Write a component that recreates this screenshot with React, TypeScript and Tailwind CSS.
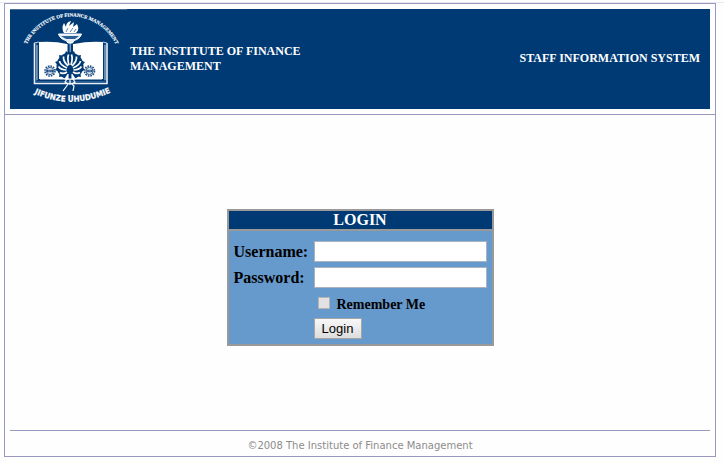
import React from "react";

const SPIKES = [-135, -105, -75, -45, -15, 15, 45, 75, 105, 135];

function Gear({ x }: { x: number }) {
  return (
    <g transform={`translate(${x} 71)`}>
      <circle r="5" fill="#fff" stroke="#1f4c82" strokeWidth="1.6" strokeDasharray="1.6 1" />
      <circle r="3.6" fill="#dce7f1" stroke="#003a75" strokeWidth="0.8" />
      <rect x="-3" y="-1.2" width="6" height="2.4" fill="#1f4c82" />
      <path d="M-2 0H2" stroke="#fff" strokeWidth="0.7" strokeDasharray="0.8 0.6" />
    </g>
  );
}

function Crest() {
  return (
    <svg viewBox="10 9 120 100" className="h-[100px] w-[120px] shrink-0" role="img" aria-label="Institute crest">
      <defs>
        <path id="crest-top" d="M23.500 53A49.500 49.500 0 0 1 119 53" />
        <path id="crest-bottom" d="M31 92Q71 112 114 91" />
      </defs>
      <path d="M10 9.500H127" stroke="#4d6c94" strokeWidth="1" />
      {/* open book */}
      <path d="M34.500 43V83.500H107V43" fill="none" stroke="#e8eff6" strokeWidth="1.600" />
      <path d="M36.500 43V81.500H105V43" fill="none" stroke="#2b5c92" strokeWidth="1" />
      <path d="M39 42Q55 41 67 44H74Q88 41 103 42V79H39Z" fill="#fff" />
      <path d="M34 43L39 42M103 42L107 43M37 45V80M105 45V80" stroke="#b9cade" strokeWidth="1" />
      <path d="M40 79.500H102" stroke="#7c9abd" strokeWidth="1" />
      {/* torch */}
      <path d="M67.500 41H73V54H67.500Z" fill="#003a75" />
      <path d="M70.200 43V52" stroke="#aac2da" strokeWidth="1" />
      <path d="M58.500 34H81.500Q80 39 74 40.500L72.500 43H68L66 40.500Q60 39 58.500 34Z" fill="#e3edf6" stroke="#fff" strokeWidth="1" />
      <path d="M61 36H79L75 39H66Z" fill="#2c5d94" />
      <path d="M64 33Q61 28 64 23L66 27Q66 22 71 21L69 26L74 22L73 27L77 24Q80 30 76 33Z" fill="#fff" />
      <path d="M66 32L68 28M70 32L73 28M74 32L76 29" stroke="#34659a" strokeWidth="0.800" />
      {/* tree */}
      {SPIKES.map((angle) => (
        <path key={angle} d="M67.500 54L70 50.500L72.500 54Z" fill="#003a75" transform={`rotate(${angle} 70 66)`} />
      ))}
      <circle cx="70" cy="66" r="13.500" fill="#003a75" />
      <path
        d="M69 65Q67 59 68.500 54.500M71 65Q73 59 71.500 54.500M68 66Q63 61 63.500 56.500M72 66Q77 61 76.500 56.500M67 68Q60 65 59.500 61M73 68Q80 65 80.500 61M66.500 70Q61 70 58.500 66.500M73.500 70Q79 70 81.500 66.500M67 72Q63 74.500 60 72.500M73 72Q77 74.500 80 72.500"
        fill="none"
        stroke="#fff"
        strokeWidth="1.700"
      />
      <path d="M64 79.500L67.500 74H72.500L76 79.500Z" fill="#fff" />
      <path d="M68.800 66H71.200L71.500 79H68.500Z" fill="#003a75" />
      <Gear x={50} />
      <Gear x={89.5} />
      {/* roots */}
      <path d="M67 79H73L75 82L72 84L74 86L73 91M67 79L65 82L68 84L66 87L63 91M70 80V85" fill="none" stroke="#fff" strokeWidth="1.200" />
      <text fill="#fff" stroke="#fff" strokeWidth="0.15" className="font-['Liberation_Serif',serif] text-[5px] font-bold">
        <textPath href="#crest-top" startOffset="50%" textAnchor="middle">
          THE INSTITUTE OF FINANCE MANAGEMENT
        </textPath>
      </text>
      <text fill="#fff" stroke="#fff" strokeWidth="0.2" className="font-['DejaVu_Sans_Condensed','DejaVu_Sans',sans-serif] text-[8px] font-bold">
        <textPath href="#crest-bottom" startOffset="50%" textAnchor="middle">
          JIFUNZE UHUDUMIE
        </textPath>
      </text>
    </svg>
  );
}

const FIELD =
  "h-[21px] w-full min-w-0 border border-[#a9b3bf] bg-white px-1 font-['Liberation_Sans',sans-serif] text-[13px] outline-none";

export default function App() {
  return (
    <div className="flex min-h-screen flex-col bg-[#fefefe] pb-1.5 pt-0.5 font-['Liberation_Serif','Times_New_Roman',serif]">
      <div className="border-t border-[#e8e8ee]" />
      <div className="ml-1 mr-2 flex flex-1 flex-col border border-[#9999c0]">
        <header className="border-b border-[#9999c0] p-[5px]">
          <div className="flex items-center justify-between bg-[#003a75] pr-2.5 text-[12px] font-bold leading-[15px] text-white">
            <div className="flex items-center">
              <Crest />
              <h1 className="w-[200px]">THE INSTITUTE OF FINANCE MANAGEMENT</h1>
            </div>
            <p className="pb-0.5">STAFF INFORMATION SYSTEM</p>
          </div>
        </header>

        <main className="flex flex-1 items-center justify-center pt-[10px]">
          <form
            className="w-[267px] border-2 border-[#999] bg-[#6699cc] text-black"
            onSubmit={(event) => event.preventDefault()}
          >
            <h2 className="border-b-2 border-[#999] bg-[#003a75] text-center text-[16px] font-bold leading-[18px] text-white">
              LOGIN
            </h2>
            <div className="grid grid-cols-[80px_1fr] items-center gap-y-[5px] px-[5px] pb-[5px] pt-[10px] text-[16px] font-bold leading-5">
              <label htmlFor="username">Username:</label>
              <input id="username" type="text" className={FIELD} />
              <label htmlFor="password">Password:</label>
              <input id="password" type="password" className={FIELD} />
              <div className="col-start-2 flex h-5 items-center gap-[7px] pl-1 pt-1 text-[14px]">
                <input
                  id="remember"
                  type="checkbox"
                  className="mb-1 size-3 appearance-none border border-[#b4b4b4] bg-[#e2e2e2] checked:bg-[#003a75]"
                />
                <label htmlFor="remember">Remember Me</label>
              </div>
              <button
                type="submit"
                className="col-start-2 h-[21px] w-12 border border-[#a5a5a5] bg-linear-to-b from-[#f8f8f8] to-[#dddddd] font-['Liberation_Sans',sans-serif] text-[13px] font-normal leading-[19px]"
              >
                Login
              </button>
            </div>
          </form>
        </main>

        <footer className="mx-[5px] border-t border-[#9999c0] pb-[3px] pt-2 text-center font-['DejaVu_Sans',Verdana,sans-serif] text-[10px] leading-[14px] text-[#8c8c8c]">
          ©2008 The Institute of Finance Management
        </footer>
      </div>
    </div>
  );
}
